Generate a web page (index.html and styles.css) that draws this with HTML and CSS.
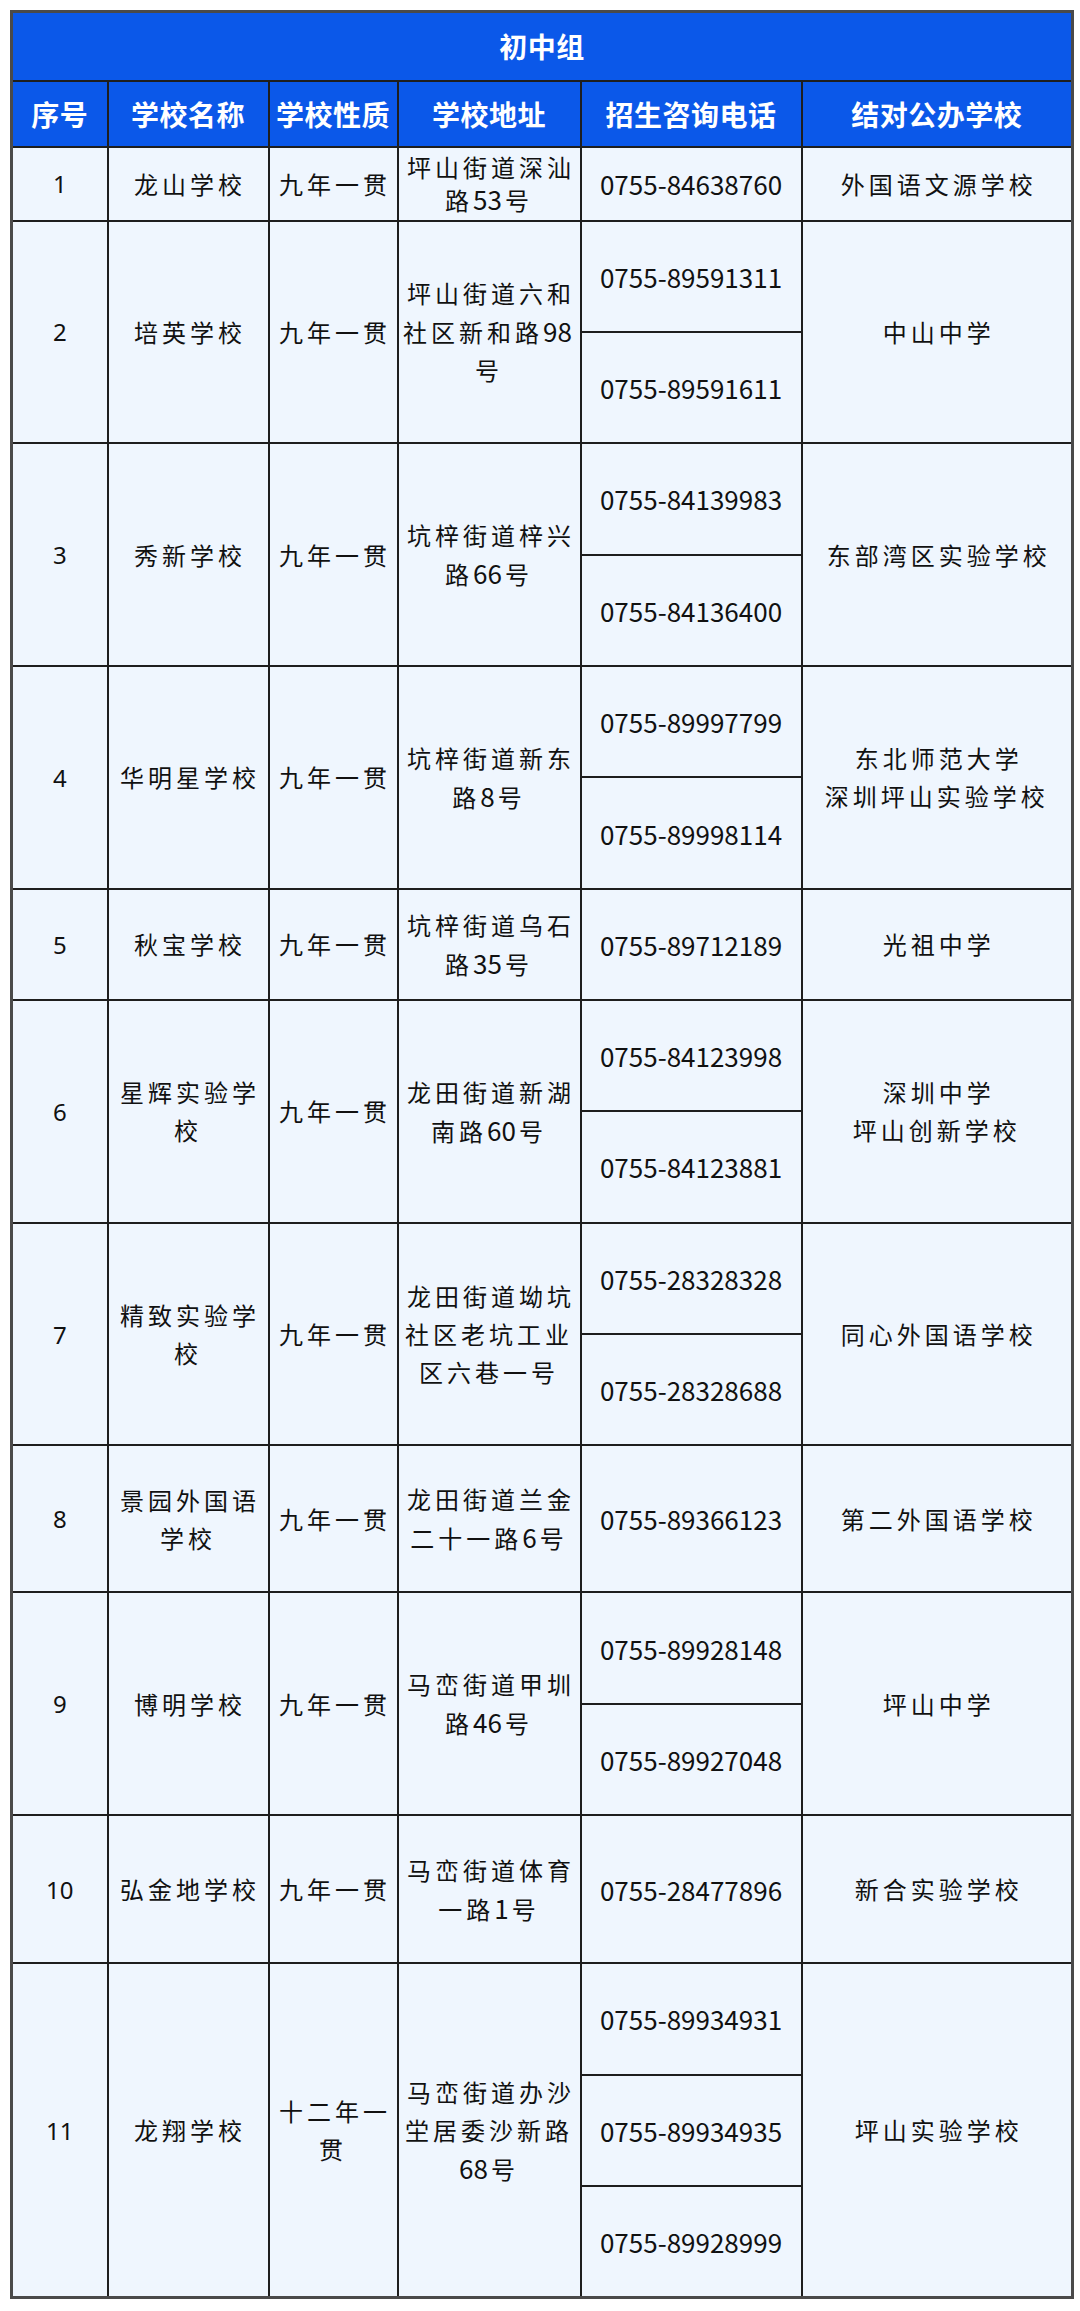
FILE: index.html
```html
<!DOCTYPE html>
<html lang="zh-CN">
<head>
<meta charset="utf-8">
<title>初中组</title>
<link rel="stylesheet" href="styles.css">
</head>
<body>
<table class="schools">
  <colgroup>
    <col class="c-no"><col class="c-name"><col class="c-type"><col class="c-addr"><col class="c-tel"><col class="c-pair">
  </colgroup>
  <thead>
    <tr class="r-title"><th colspan="6">初中组</th></tr>
    <tr class="r-head">
      <th>序号</th><th>学校名称</th><th>学校性质</th><th>学校地址</th><th>招生咨询电话</th><th>结对公办学校</th>
    </tr>
  </thead>
  <tbody>
    <tr class="h74">
      <td class="no">1</td><td class="cn">龙山学校</td><td class="cn">九年一贯</td>
      <td class="cn addr tight">坪山街道深汕<br>路<span class="num">53</span>号</td>
      <td class="tel">0755-84638760</td><td class="cn">外国语文源学校</td>
    </tr>

    <tr class="hp">
      <td class="no" rowspan="2">2</td><td class="cn" rowspan="2">培英学校</td><td class="cn" rowspan="2">九年一贯</td>
      <td class="cn addr" rowspan="2">坪山街道六和<br>社区新和路<span class="num">98</span><br>号</td>
      <td class="tel">0755-89591311</td><td class="cn" rowspan="2">中山中学</td>
    </tr>
    <tr class="hp"><td class="tel">0755-89591611</td></tr>

    <tr class="hp">
      <td class="no" rowspan="2">3</td><td class="cn" rowspan="2">秀新学校</td><td class="cn" rowspan="2">九年一贯</td>
      <td class="cn addr" rowspan="2">坑梓街道梓兴<br>路<span class="num">66</span>号</td>
      <td class="tel">0755-84139983</td><td class="cn" rowspan="2">东部湾区实验学校</td>
    </tr>
    <tr class="hp"><td class="tel">0755-84136400</td></tr>

    <tr class="hp">
      <td class="no" rowspan="2">4</td><td class="cn" rowspan="2">华明星学校</td><td class="cn" rowspan="2">九年一贯</td>
      <td class="cn addr" rowspan="2">坑梓街道新东<br>路<span class="num">8</span>号</td>
      <td class="tel">0755-89997799</td><td class="cn" rowspan="2">东北师范大学<br>深圳坪山实验学校</td>
    </tr>
    <tr class="hp"><td class="tel">0755-89998114</td></tr>

    <tr class="h111">
      <td class="no">5</td><td class="cn">秋宝学校</td><td class="cn">九年一贯</td>
      <td class="cn addr">坑梓街道乌石<br>路<span class="num">35</span>号</td>
      <td class="tel">0755-89712189</td><td class="cn">光祖中学</td>
    </tr>

    <tr class="hp">
      <td class="no" rowspan="2">6</td><td class="cn" rowspan="2">星辉实验学<br>校</td><td class="cn" rowspan="2">九年一贯</td>
      <td class="cn addr" rowspan="2">龙田街道新湖<br>南路<span class="num">60</span>号</td>
      <td class="tel">0755-84123998</td><td class="cn" rowspan="2">深圳中学<br>坪山创新学校</td>
    </tr>
    <tr class="hp"><td class="tel">0755-84123881</td></tr>

    <tr class="hp">
      <td class="no" rowspan="2">7</td><td class="cn" rowspan="2">精致实验学<br>校</td><td class="cn" rowspan="2">九年一贯</td>
      <td class="cn addr" rowspan="2">龙田街道坳坑<br>社区老坑工业<br>区六巷一号</td>
      <td class="tel">0755-28328328</td><td class="cn" rowspan="2">同心外国语学校</td>
    </tr>
    <tr class="hp"><td class="tel">0755-28328688</td></tr>

    <tr class="h147">
      <td class="no">8</td><td class="cn">景园外国语<br>学校</td><td class="cn">九年一贯</td>
      <td class="cn addr">龙田街道兰金<br>二十一路<span class="num">6</span>号</td>
      <td class="tel">0755-89366123</td><td class="cn">第二外国语学校</td>
    </tr>

    <tr class="hp">
      <td class="no" rowspan="2">9</td><td class="cn" rowspan="2">博明学校</td><td class="cn" rowspan="2">九年一贯</td>
      <td class="cn addr" rowspan="2">马峦街道甲圳<br>路<span class="num">46</span>号</td>
      <td class="tel">0755-89928148</td><td class="cn" rowspan="2">坪山中学</td>
    </tr>
    <tr class="hp"><td class="tel">0755-89927048</td></tr>

    <tr class="h148">
      <td class="no">10</td><td class="cn">弘金地学校</td><td class="cn">九年一贯</td>
      <td class="cn addr">马峦街道体育<br>一路<span class="num">1</span>号</td>
      <td class="tel">0755-28477896</td><td class="cn">新合实验学校</td>
    </tr>

    <tr class="hp">
      <td class="no" rowspan="3">11</td><td class="cn" rowspan="3">龙翔学校</td><td class="cn" rowspan="3">十二年一<br>贯</td>
      <td class="cn addr" rowspan="3">马峦街道办沙<br>坣居委沙新路<br><span class="num">68</span>号</td>
      <td class="tel">0755-89934931</td><td class="cn" rowspan="3">坪山实验学校</td>
    </tr>
    <tr class="hp"><td class="tel">0755-89934935</td></tr>
    <tr class="hp"><td class="tel">0755-89928999</td></tr>
  </tbody>
</table>
</body>
</html>
```

FILE: styles.css
```css
html, body {
  margin: 0;
  background: #ffffff;
}

body {
  padding: 10px 10px 0 10px;
  font-family: "Noto Sans CJK SC", "Noto Sans", sans-serif;
  color: #111111;
}

.schools {
  border-collapse: collapse;
  table-layout: fixed;
  width: 1061px;
  border: 3px solid #4a4a4a;
}

.c-no { width: 96px; }
.c-name { width: 161px; }
.c-type { width: 129px; }
.c-addr { width: 183px; }
.c-tel { width: 221px; }
.c-pair { width: 271px; }

.schools th,
.schools td {
  border: 2px solid #1e1e1e;
  text-align: center;
  vertical-align: middle;
  padding: 0 2px;
}

.schools th {
  background: #0b58e9;
  color: #ffffff;
  font-weight: 700;
  font-size: 28px;
  line-height: 36px;
  letter-spacing: 0.5px;
}

.r-title { height: 69px; }
.r-head { height: 66px; }

.schools td {
  background: #eff6fe;
}

.no {
  font-family: "Noto Sans", sans-serif;
  font-size: 24px;
}

.cn {
  font-size: 24px;
  line-height: 38px;
  letter-spacing: 4px;
  text-indent: 4px;
  white-space: nowrap;
}

.num {
  font-size: 26px;
  letter-spacing: 0;
  margin-right: 3px;
}

.tight {
  line-height: 32px;
}

.tel {
  font-family: "Noto Sans CJK SC", "Noto Sans", sans-serif;
  font-size: 26px;
  letter-spacing: 0;
  white-space: nowrap;
}

.h74 { height: 74px; }
.hp { height: 111.4px; }
.h111 { height: 111px; }
.h147 { height: 147px; }
.h148 { height: 148px; }
```
